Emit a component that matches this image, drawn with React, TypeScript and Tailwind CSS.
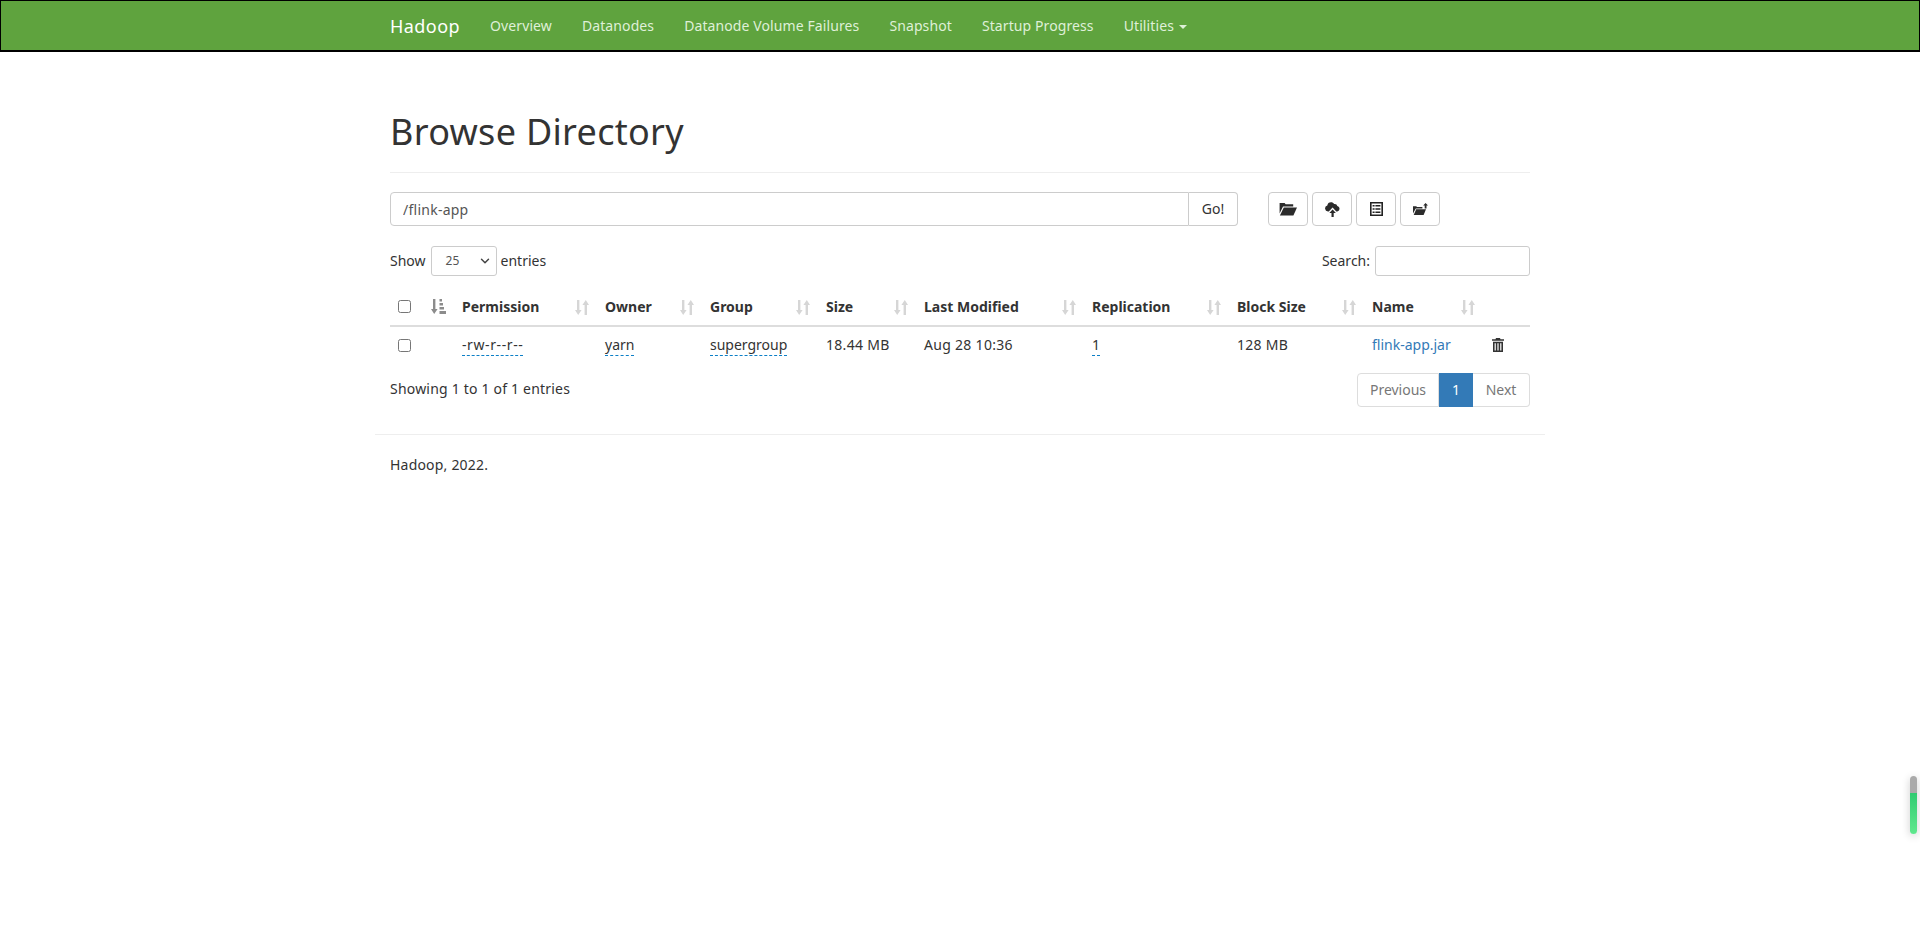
import { ChevronDown } from "lucide-react";

const navLinks = ["Overview", "Datanodes", "Datanode Volume Failures", "Snapshot", "Startup Progress"];

const columns = [
  { label: "Permission", width: "w-[143px]" },
  { label: "Owner", width: "w-[105px]" },
  { label: "Group", width: "w-[116px]" },
  { label: "Size", width: "w-[98px]" },
  { label: "Last Modified", width: "w-[168px]" },
  { label: "Replication", width: "w-[145px]" },
  { label: "Block Size", width: "w-[135px]" },
  { label: "Name", width: "w-[119px]" },
];

function SortIcon() {
  return (
    <svg viewBox="0 0 14 15" width="14" height="15" fill="#d6d6d6">
      <path d="M2 0h2.400v10H6.600L3.200 15 0 10h2zM9.600 15H12V5h2L10.800 0 7.400 5h2.200z" />
    </svg>
  );
}

function SortedIcon() {
  return (
    <svg viewBox="0 0 15 15" width="15" height="15" fill="#8c8c8c">
      <path d="M2 0h2.400v10H6.600L3.200 15 0 10h2z" />
      <path d="M8.500 0H11v2.500H8.500zM8.500 4h3.500v2.500H8.500zM8.500 8H13v2.500H8.500zM8.500 12H15v3H8.500z" />
    </svg>
  );
}

function FolderOpenIcon() {
  return (
    <svg viewBox="0 0 18 14" width="18" height="14" fill="#2b2b2b">
      <path d="M.6 1h5l1 1.300h7.600V4.500H4L.6 11.500z" />
      <path d="M4.800 5.500H18l-3.600 8H.9z" />
    </svg>
  );
}

function CloudUploadIcon() {
  return (
    <svg viewBox="0 0 15 16" width="15" height="16" fill="#2b2b2b">
      <path d="M3.800 10.500H3A3 3 0 0 1 2.300 4.600 3.800 3.800 0 0 1 6 1.300c1.400 0 2.400.6 3.100 1.700A2.700 2.700 0 0 1 12.300 5 2.800 2.800 0 0 1 12.300 10.500h-1L7.600 6.500z" />
      <path d="M7.600 8.400l3.300 3.500H8.700V16H6.500v-4.100H4.300z" />
    </svg>
  );
}

function ListAltIcon() {
  return (
    <svg viewBox="0 0 13 14" width="13" height="14">
      <path d="M.8.800h11.400v12.400H.8z" fill="#fff" stroke="#222" strokeWidth="1.600" />
      <path d="M2.600 3h2v1.600h-2zM5.400 3h5v1.600h-5zM2.600 6.200h2v1.600h-2zM5.400 6.200h5v1.600h-5zM2.600 9.400h2v1.600h-2zM5.400 9.400h5v1.600h-5z" fill="#222" />
    </svg>
  );
}

function FolderUpIcon() {
  return (
    <svg viewBox="0 0 15 12" width="15" height="12" fill="#2b2b2b">
      <path d="M0 3.200h3.200l.8.900h5.400v1.300H2.800L0 10.500z" />
      <path d="M3.200 6.200H13L10.600 12H.7z" />
      <path d="M10.200 2.600L12.600 0 15 2.600h-1.500v3h-1.800v-3z" />
    </svg>
  );
}

function TrashIcon() {
  return (
    <svg viewBox="0 0 12 14" width="12" height="14" fill="#333">
      <path d="M4 0h4l.5 1.300H12v1.500H0V1.300h3.500z" />
      <path
        fillRule="evenodd"
        d="M1 3.800h10V14H1zM2.600 5.300V12.500H3.800V5.300zM5.400 5.300V12.500H6.600V5.300zM8.200 5.300V12.500H9.400V5.300z"
      />
    </svg>
  );
}

function Abbr({ children, className }: { children: string; className?: string }) {
  return <span className={`border-b border-dashed border-[#0b7fc7] pb-px ${className ?? ""}`}>{children}</span>;
}

function ToolButton({ children }: { children: React.ReactNode }) {
  return (
    <button className="flex h-[34px] w-10 items-center justify-center rounded border border-[#ccc] bg-white">
      {children}
    </button>
  );
}

export default function App() {
  return (
    <div className="relative min-h-[937px] bg-white font-['Noto_Sans','Open_Sans',sans-serif] text-sm text-[#333]">
      <nav className="h-[52px] border border-b-2 border-black bg-[#5fa33e]">
        <div className="mx-auto flex h-full w-[1170px] items-center px-[15px]">
          <a className="mr-[30px] text-lg tracking-[0.45px] text-white">Hadoop</a>
          <div className="flex gap-[30px] tracking-[0.1px] text-[#dff0d8]">
            {navLinks.map((link) => (
              <a key={link}>{link}</a>
            ))}
            <a className="flex items-center gap-[5px]">
              Utilities
              <span className="mt-0.5 border-x-4 border-t-4 border-x-transparent border-t-[#dff0d8]" />
            </a>
          </div>
        </div>
      </nav>

      <main className="mx-auto w-[1170px] px-[15px]">
        <div className="mt-[60px] border-b border-[#eee] pb-5">
          <h1 className="text-4xl leading-[40px] tracking-[0.3px] text-[#333]">Browse Directory</h1>
        </div>

        <div className="mt-[19px] flex">
          <div className="flex w-[848px]">
            <input
              readOnly
              value="/flink-app"
              className="h-[34px] flex-1 rounded-l border border-[#ccc] px-3 text-sm tracking-[0.25px] text-[#555] outline-none"
            />
            <button className="h-[34px] w-[49px] rounded-r border border-l-0 border-[#ccc] bg-white text-[#333]">Go!</button>
          </div>
          <div className="ml-[30px] flex gap-1">
            <ToolButton><FolderOpenIcon /></ToolButton>
            <ToolButton><CloudUploadIcon /></ToolButton>
            <ToolButton><ListAltIcon /></ToolButton>
            <ToolButton><FolderUpIcon /></ToolButton>
          </div>
        </div>

        <div className="mt-[20px] flex h-[30px] items-center justify-between">
          <div className="flex items-center gap-[4px]">
            Show
            <div className="ml-px flex h-[30px] w-[66px] items-center justify-between rounded-[3px] border border-[#ccc] pl-[14px] pr-1 text-xs text-[#555]">
              25
              <ChevronDown size={14} strokeWidth={2.5} className="text-[#444]" />
            </div>
            entries
          </div>
          <div className="flex items-center gap-[5px]">
            Search:
            <div className="h-[30px] w-[155px] rounded-[3px] border border-[#ccc]" />
          </div>
        </div>

        <table className="mt-[13px] w-[1140px] table-fixed border-collapse">
          <thead>
            <tr className="h-[37px] border-b-2 border-[#ddd] text-left font-bold">
              <th className="w-[38px] pb-0.5 pl-2"><input type="checkbox" className="block h-[13px] w-[13px]" /></th>
              <th className="w-[26px] pb-0.5 pl-[3px]"><SortedIcon /></th>
              {columns.map((col) => (
                <th key={col.label} className={`${col.width} px-2`}>
                  <div className="flex items-center justify-between">
                    {col.label}
                    <SortIcon />
                  </div>
                </th>
              ))}
              <th />
            </tr>
          </thead>
          <tbody>
            <tr className="h-[37px]">
              <td className="pl-2"><input type="checkbox" className="block h-[13px] w-[13px]" /></td>
              <td />
              <td className="px-2"><Abbr className="tracking-[0.6px]">-rw-r--r--</Abbr></td>
              <td className="px-2"><Abbr>yarn</Abbr></td>
              <td className="px-2"><Abbr>supergroup</Abbr></td>
              <td className="px-2 tracking-[0.3px]">18.44 MB</td>
              <td className="px-2 tracking-[0.3px]">Aug 28 10:36</td>
              <td className="px-2"><Abbr>1</Abbr></td>
              <td className="px-2 tracking-[0.3px]">128 MB</td>
              <td className="px-2 text-[#337ab7]">flink-app.jar</td>
              <td className="pl-[9px] pr-2"><TrashIcon /></td>
            </tr>
          </tbody>
        </table>

        <div className="mt-[10px] flex items-start justify-between">
          <div className="pt-1.5 tracking-[0.2px]">Showing 1 to 1 of 1 entries</div>
          <div className="flex h-[34px]">
            <div className="flex w-[82px] items-center justify-center rounded-l border border-[#ddd] text-[#777]">Previous</div>
            <div className="flex w-[34px] items-center justify-center bg-[#337ab7] text-white">1</div>
            <div className="flex w-[57px] items-center justify-center rounded-r border border-l-0 border-[#ddd] text-[#777]">Next</div>
          </div>
        </div>
      </main>

      <div className="mx-auto mt-[27px] w-[1170px] border-t border-[#eee] pl-[15px] pt-5 tracking-[0.2px]">Hadoop, 2022.</div>

      <div className="fixed left-[1910px] top-[776px] flex h-[58px] w-[7px] flex-col overflow-hidden rounded-full shadow-[0_2px_8px_rgba(0,0,0,0.2)]">
        <div className="h-[17px] bg-[#aaa]" />
        <div className="flex-1 bg-gradient-to-b from-[#2ecc71] to-[#5fe88e]" />
      </div>
    </div>
  );
}
